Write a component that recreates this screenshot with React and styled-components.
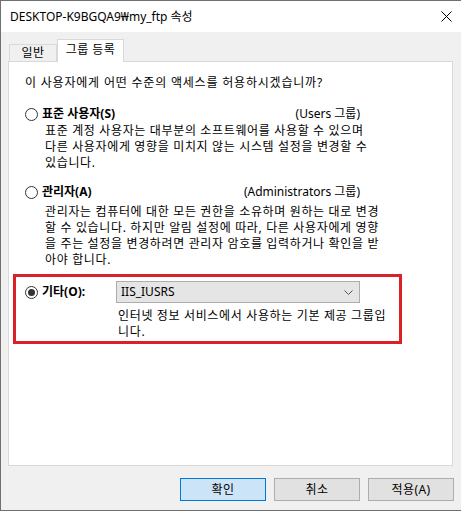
import React from 'react'
import styled, { createGlobalStyle } from 'styled-components';

const GlobalStyle = createGlobalStyle`
  html, body {
    margin: 0;
    padding: 0;
    background: #f0f0f0;
  }
  body {
    font-family: "Noto Sans", "Noto Sans CJK KR", sans-serif;
    font-size: 12px;
    color: #000;
  }
`;

const Window = styled.div`
  width: 461px;
  height: 511px;
  box-sizing: border-box;
  border: 1px solid #707070;
  border-right: none;
  background: #f0f0f0;
  display: flex;
  flex-direction: column;
`;

const TitleBar = styled.div`
  height: 31px;
  flex: none;
  background: #fff;
  display: flex;
  align-items: center;
  justify-content: space-between;
  padding: 0 9px 0 9px;
`;

const Title = styled.span`
  line-height: 16px;
`;

const Body = styled.div`
  flex: 1;
  display: flex;
  flex-direction: column;
  padding: 8px 0 0 7px;
`;

const TabRow = styled.div`
  display: flex;
  align-items: flex-end;
  height: 22px;
  margin: 0 0 -1px 1px;
  position: relative;
  z-index: 1;
`;

const Tab = styled.div`
  box-sizing: border-box;
  width: ${p => p.$width}px;
  height: ${p => (p.$active ? 23 : 17)}px;
  margin-bottom: ${p => (p.$active ? 0 : 1)}px;
  border: 1px solid #d9d9d9;
  border-bottom: none;
  background: ${p => (p.$active ? '#fff' : '#f0f0f0')};
  display: flex;
  align-items: center;
  justify-content: center;
  padding-bottom: ${p => (p.$active ? 2 : 0)}px;
  line-height: 16px;
  letter-spacing: 0.4px;
`;

const Panel = styled.div`
  box-sizing: border-box;
  width: 445px;
  height: 405px;
  flex: none;
  border: 1px solid #d9d9d9;
  background: #fff;
  padding: 13px 0 0 0;
  display: flex;
  flex-direction: column;
`;

const Intro = styled.div`
  margin-left: 16px;
  line-height: 16px;
  white-space: nowrap;
  letter-spacing: 0.8px;
`;

const Option = styled.div`
  margin: ${p => p.$top}px 0 0 16px;
`;

const OptionRow = styled.div`
  display: flex;
  align-items: center;
  width: 335px;
  height: ${p => p.$height || 16}px;
`;

const Radio = styled.span`
  box-sizing: border-box;
  width: 13px;
  height: 13px;
  flex: none;
  border-radius: 50%;
  border: 1px solid #333;
  background: #fff;
  display: flex;
  align-items: center;
  justify-content: center;
  &::after {
    content: '';
    display: ${p => (p.$checked ? 'block' : 'none')};
    width: 7px;
    height: 7px;
    border-radius: 50%;
    background: #333;
  }
`;

const Label = styled.span`
  margin-left: 4px;
  font-weight: 700;
  line-height: 16px;
  white-space: nowrap;
  width: ${p => (p.$width ? `${p.$width}px` : 'auto')};
  flex: none;
`;

const Group = styled.span`
  margin-left: auto;
  line-height: 16px;
  white-space: nowrap;
`;

const Desc = styled.div`
  margin: ${p => p.$top}px 0 0 ${p => p.$left}px;
  line-height: 16px;
  letter-spacing: 0.65px;
`;

const Line = styled.div`
  white-space: nowrap;
`;

const Highlight = styled.div`
  box-sizing: border-box;
  width: 389px;
  height: 70px;
  margin: 6px 0 0 4px;
  border: 3px solid #da2128;
  padding: 4px 0 0 9px;
`;

const Combo = styled.div`
  box-sizing: border-box;
  width: 263px;
  height: 22px;
  border: 1px solid #adadad;
  background: #e5e5e5;
  display: flex;
  align-items: center;
  justify-content: space-between;
  padding: 0 6px 0 4px;
  line-height: 16px;
`;

const Footer = styled.div`
  display: flex;
  justify-content: flex-end;
  gap: 8px;
  padding: 12px 7px 0 0;
`;

const Button = styled.div`
  box-sizing: border-box;
  width: 86px;
  height: 23px;
  border: 1px solid ${p => (p.$primary ? '#0078d7' : '#adadad')};
  background: ${p => (p.$primary ? '#cce4f7' : '#e1e1e1')};
  display: flex;
  align-items: center;
  justify-content: center;
  line-height: 16px;
  letter-spacing: 0.4px;
`;

const CloseIcon = () => (
  <svg width="11" height="11" viewBox="0 0 11 11">
    <path d="M0.5 0.5 L10.5 10.5 M10.5 0.5 L0.5 10.5" stroke="#000" strokeWidth="1" fill="none" />
  </svg>
);

const Chevron = () => (
  <svg width="9" height="5" viewBox="0 0 9 5">
    <path d="M0.5 0.5 L4.5 4.5 L8.5 0.5" stroke="#555" strokeWidth="1" fill="none" />
  </svg>
);

const userLines = [
  '표준 계정 사용자는 대부분의 소프트웨어를 사용할 수 있으며',
  '다른 사용자에게 영향을 미치지 않는 시스템 설정을 변경할 수',
  '있습니다.',
];

const adminLines = [
  '관리자는 컴퓨터에 대한 모든 권한을 소유하며 원하는 대로 변경',
  '할 수 있습니다. 하지만 알림 설정에 따라, 다른 사용자에게 영향',
  '을 주는 설정을 변경하려면 관리자 암호를 입력하거나 확인을 받',
  '아야 합니다.',
];

const otherLines = [
  '인터넷 정보 서비스에서 사용하는 기본 제공 그룹입',
  '니다.',
];

const App = () => {
  return (
    <Window>
      <GlobalStyle />
      <TitleBar>
        <Title>DESKTOP-K9BGQA9₩my_ftp 속성</Title>
        <CloseIcon />
      </TitleBar>

      <Body>
        <TabRow>
          <Tab $width={48}>일반</Tab>
          <Tab $width={67} $active>그룹 등록</Tab>
        </TabRow>

        <Panel>
          <Intro>이 사용자에게 어떤 수준의 액세스를 허용하시겠습니까?</Intro>

          <Option $top={15}>
            <OptionRow>
              <Radio />
              <Label>표준 사용자(S)</Label>
              <Group>(Users 그룹)</Group>
            </OptionRow>
            <Desc $top={1} $left={20}>
              {userLines.map(l => <Line key={l}>{l}</Line>)}
            </Desc>
          </Option>

          <Option $top={13}>
            <OptionRow>
              <Radio />
              <Label>관리자(A)</Label>
              <Group>(Administrators 그룹)</Group>
            </OptionRow>
            <Desc $top={4} $left={20}>
              {adminLines.map(l => <Line key={l}>{l}</Line>)}
            </Desc>
          </Option>

          <Highlight>
            <OptionRow $height={22}>
              <Radio $checked />
              <Label $width={74}>기타(O):</Label>
              <Combo>
                <span>IIS_IUSRS</span>
                <Chevron />
              </Combo>
            </OptionRow>
            <Desc $top={5} $left={93}>
              {otherLines.map(l => <Line key={l}>{l}</Line>)}
            </Desc>
          </Highlight>
        </Panel>

        <Footer>
          <Button $primary>확인</Button>
          <Button>취소</Button>
          <Button>적용(A)</Button>
        </Footer>
      </Body>
    </Window>
  )
}

export default App
